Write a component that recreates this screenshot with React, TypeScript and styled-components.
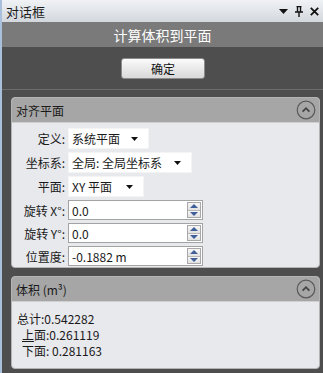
import React from "react"
import styled, { createGlobalStyle } from "styled-components"

const GlobalStyle = createGlobalStyle`
  html, body {
    margin: 0;
    padding: 0;
    background: #4d4d4d;
  }
  body {
    font-family: "Noto Sans CJK SC", "Liberation Sans", sans-serif;
    font-size: 12px;
  }
`

const Frame = styled.div`
  width: 323px;
  height: 373px;
  box-sizing: border-box;
  display: flex;
  flex-direction: column;
  background: #4e4e4e;
  border-left: 2px solid #a9c0dc;
  overflow: hidden;
`

const TitleBar = styled.div`
  height: 22px;
  flex: none;
  display: flex;
  align-items: center;
  justify-content: space-between;
  padding: 0 4px 0 6px;
  margin-left: -2px;
  background: linear-gradient(#f0f2f5, #d3d8de);
  color: #1a1a1a;
  font-size: 13px;
`

const TitleIcons = styled.div`
  display: flex;
  align-items: center;
  gap: 7px;
`

const Heading = styled.div`
  height: 25px;
  flex: none;
  display: flex;
  align-items: center;
  justify-content: center;
  background: #7a7a7a;
  color: #ffffff;
  font-size: 14px;
`

const ActionBar = styled.div`
  height: 42px;
  flex: none;
  display: flex;
  align-items: center;
  justify-content: center;
  border-bottom: 1px solid #6c6c6c;
`

const OkButton = styled.button`
  width: 84px;
  height: 21px;
  padding: 0;
  margin-left: 1px;
  border: 1px solid #8c8c8c;
  border-radius: 3px;
  background: linear-gradient(#fbfbfb, #e9e9e9 50%, #d9d9d9);
  font-family: inherit;
  font-size: 12px;
  color: #111;
`

const Content = styled.div`
  display: flex;
  flex-direction: column;
  gap: 8px;
  padding: 7px 3px 0 9px;
`

const Panel = styled.div<{ $height: number }>`
  height: ${p => p.$height}px;
  box-sizing: border-box;
  border: 1px solid #b4b4b4;
  border-radius: 4px;
  background: #e8e9ed;
  overflow: hidden;
  display: flex;
  flex-direction: column;
`

const PanelHeader = styled.div`
  height: 24px;
  flex: none;
  display: flex;
  align-items: center;
  justify-content: space-between;
  padding: 0 3px 0 4px;
  background: #a6a6a6;
  border-bottom: 1px solid #cfcfcf;
  color: #1a1a1a;
  font-size: 12px;
`

const FormBody = styled.div`
  display: flex;
  flex-direction: column;
  gap: 3px;
  padding-top: 5px;
`

const Row = styled.div`
  display: flex;
  align-items: center;
`

const Label = styled.div`
  width: 53px;
  padding-right: 3px;
  text-align: right;
  color: #1a1a1a;
  white-space: nowrap;
`

const Combo = styled.div<{ $width: number }>`
  width: ${p => p.$width}px;
  height: 21px;
  box-sizing: border-box;
  display: flex;
  align-items: center;
  justify-content: space-between;
  padding: 0 10px 0 3px;
  background: #ffffff;
  border: 1px solid #f4f4f4;
  color: #1a1a1a;
`

const Spinner = styled.div`
  width: 135px;
  height: 20px;
  box-sizing: border-box;
  display: flex;
  align-items: center;
  background: #ffffff;
  border: 1px solid #a3a3a3;
`

const SpinText = styled.div`
  flex: 1;
  padding-left: 3px;
  color: #1a1a1a;
`

const SpinButtons = styled.div`
  width: 14px;
  height: 16px;
  margin-right: 1px;
  box-sizing: border-box;
  display: flex;
  flex-direction: column;
  border: 1px solid #a8a8a8;
`

const SpinHalf = styled.div`
  flex: 1;
  display: flex;
  align-items: center;
  justify-content: center;
  background: linear-gradient(#f6f6f6, #e2e2e2);
  & + & {
    border-top: 1px solid #b8b8b8;
  }
`

const ResultBody = styled.div`
  display: flex;
  flex-direction: column;
  padding: 9px 0 0 5px;
  line-height: 16px;
  color: #1a1a1a;
`

const ResultLine = styled.span<{ $indent?: boolean }>`
  padding-left: ${p => (p.$indent ? "5px" : "0")};
`

const Access = styled.span`
  text-decoration: underline;
  margin-left: -2px;
  padding-left: 2px;
`

function Arrow() {
  return (
    <svg width="7" height="4" viewBox="0 0 7 4">
      <path d="M0 0h7L3.5 4z" fill="#111" />
    </svg>
  )
}

function Collapse() {
  return (
    <svg width="20" height="20" viewBox="0 0 20 20">
      <circle cx="10" cy="10" r="8.8" fill="none" stroke="#5a5a5a" strokeWidth="1.2" />
      <path d="M6.6 11.6L10 8.2l3.4 3.4" fill="none" stroke="#444" strokeWidth="1.8" />
    </svg>
  )
}

function SpinArrow({ up }: { up?: boolean }) {
  return (
    <svg width="8" height="4" viewBox="0 0 8 4">
      <path d={up ? "M0 4h8L4 0z" : "M0 0h8L4 4z"} fill="#3e5f99" />
    </svg>
  )
}

function NumberField({ value }: { value: string }) {
  return (
    <Spinner>
      <SpinText>{value}</SpinText>
      <SpinButtons>
        <SpinHalf><SpinArrow up /></SpinHalf>
        <SpinHalf><SpinArrow /></SpinHalf>
      </SpinButtons>
    </Spinner>
  )
}

export default function App() {
  return (
    <Frame>
      <GlobalStyle />
      <TitleBar>
        <span>对话框</span>
        <TitleIcons>
          <svg width="9" height="5" viewBox="0 0 9 5"><path d="M0 0h9L4.5 5z" fill="#111" /></svg>
          <svg width="8" height="11" viewBox="0 0 8 11">
            <path d="M1.5 0.5h5M2.5 0.5v5M5.5 0.5v5M0 6h8M4 6v5" stroke="#111" strokeWidth="1.4" fill="none" />
          </svg>
          <svg width="9" height="9" viewBox="0 0 9 9">
            <path d="M0.8 0.8l7.4 7.4M8.2 0.8L0.8 8.2" stroke="#111" strokeWidth="1.8" />
          </svg>
        </TitleIcons>
      </TitleBar>
      <Heading>计算体积到平面</Heading>
      <ActionBar>
        <OkButton>确定</OkButton>
      </ActionBar>
      <Content>
        <Panel $height={171}>
          <PanelHeader>
            <span>对齐平面</span>
            <Collapse />
          </PanelHeader>
          <FormBody>
            <Row>
              <Label>定义:</Label>
              <Combo $width={81}>系统平面<Arrow /></Combo>
            </Row>
            <Row>
              <Label>坐标系:</Label>
              <Combo $width={124}>全局: 全局坐标系<Arrow /></Combo>
            </Row>
            <Row>
              <Label>平面:</Label>
              <Combo $width={76}>XY 平面<Arrow /></Combo>
            </Row>
            <Row>
              <Label>旋转 X°:</Label>
              <NumberField value="0.0" />
            </Row>
            <Row>
              <Label>旋转 Y°:</Label>
              <NumberField value="0.0" />
            </Row>
            <Row>
              <Label>位置度:</Label>
              <NumberField value="-0.1882 m" />
            </Row>
          </FormBody>
        </Panel>
        <Panel $height={93}>
          <PanelHeader>
            <span>体积 (m³)</span>
            <Collapse />
          </PanelHeader>
          <ResultBody>
            <ResultLine>总计:0.542282</ResultLine>
            <ResultLine $indent><Access>上</Access>面:0.261119</ResultLine>
            <ResultLine $indent>下面: 0.281163</ResultLine>
          </ResultBody>
        </Panel>
      </Content>
    </Frame>
  )
}
